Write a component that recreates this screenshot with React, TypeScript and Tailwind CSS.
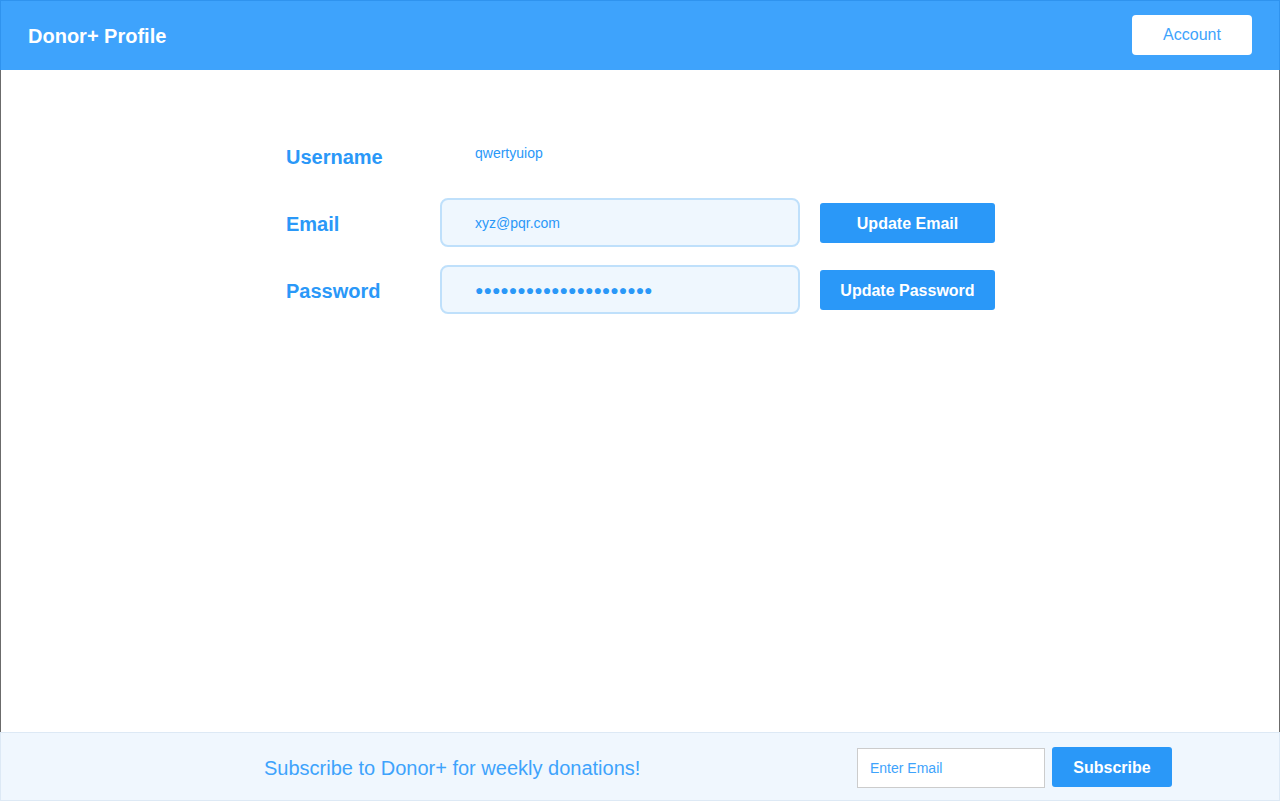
import React from "react";

export default function App() {
  const font = { fontFamily: '"Liberation Sans", Arial, sans-serif' };
  const label = "w-[154px] pt-[2px] text-[20px] leading-[24px] font-bold text-[#2a98f8]";
  return (
    <div className="w-full h-[802px] flex flex-col bg-white" style={font}>
      <header className="h-[70px] shrink-0 bg-[#3ea3fc] border border-b-0 border-[#2f93ee] flex items-start justify-between pl-[27px] pr-[27px]">
        <h1 className="mt-[23px] text-[20px] leading-[24px] font-bold text-white">Donor+ Profile</h1>
        <button className="mt-[14px] w-[120px] h-[40px] bg-white rounded-[4px] text-[16px] text-[#3ea3fc]">
          Account
        </button>
      </header>
      <main className="flex-1 border-x border-[#6b6b6b] pt-[61px] pl-[285px]">
        <div className="flex flex-col gap-[18px]">
          <div className="flex items-center h-[49px]">
            <div className={label}>Username</div>
            <div className="pl-[35px] pb-[4px] text-[14px] text-[#2a98f8]">qwertyuiop</div>
          </div>
          <div className="flex items-center h-[49px]">
            <div className={label}>Email</div>
            <div className="w-[360px] h-[49px] border-2 border-[#bfe0fb] rounded-[8px] bg-[#eff7fe] flex items-center pl-[33px] pt-[1px] text-[14px] text-[#2a98f8]">
              xyz@pqr.com
            </div>
            <button className="ml-[20px] w-[175px] h-[40px] pt-[2px] bg-[#2a98f8] rounded-[3px] text-[16px] font-bold text-white">
              Update Email
            </button>
          </div>
          <div className="flex items-center h-[49px]">
            <div className={label}>Password</div>
            <div className="w-[360px] h-[49px] border-2 border-[#bfe0fb] rounded-[8px] bg-[#eff7fe] flex items-center pl-[33px] pt-[1px] text-[14px] text-[#2a98f8]">
              ●●●●●●●●●●●●●●●●●●●●●
            </div>
            <button className="ml-[20px] w-[175px] h-[40px] pt-[2px] bg-[#2a98f8] rounded-[3px] text-[16px] font-bold text-white">
              Update Password
            </button>
          </div>
        </div>
      </main>
      <footer className="h-[69px] mb-[1px] shrink-0 bg-[#f0f7fe] border border-[#dde9f5] flex items-center pl-[263px]">
        <div className="w-[593px] pt-[2px] text-[20px] text-[#3ea3fc]">Subscribe to Donor+ for weekly donations!</div>
        <div className="w-[188px] h-[40px] bg-white border border-[#cccccc] flex items-center pl-[12px] pt-[2px] text-[14px] text-[#3ea3fc] mt-[2px]">
          Enter Email
        </div>
        <button className="ml-[7px] w-[120px] h-[40px] pt-[2px] bg-[#2a98f8] rounded-[3px] text-[16px] font-bold text-white">
          Subscribe
        </button>
      </footer>
    </div>
  );
}
